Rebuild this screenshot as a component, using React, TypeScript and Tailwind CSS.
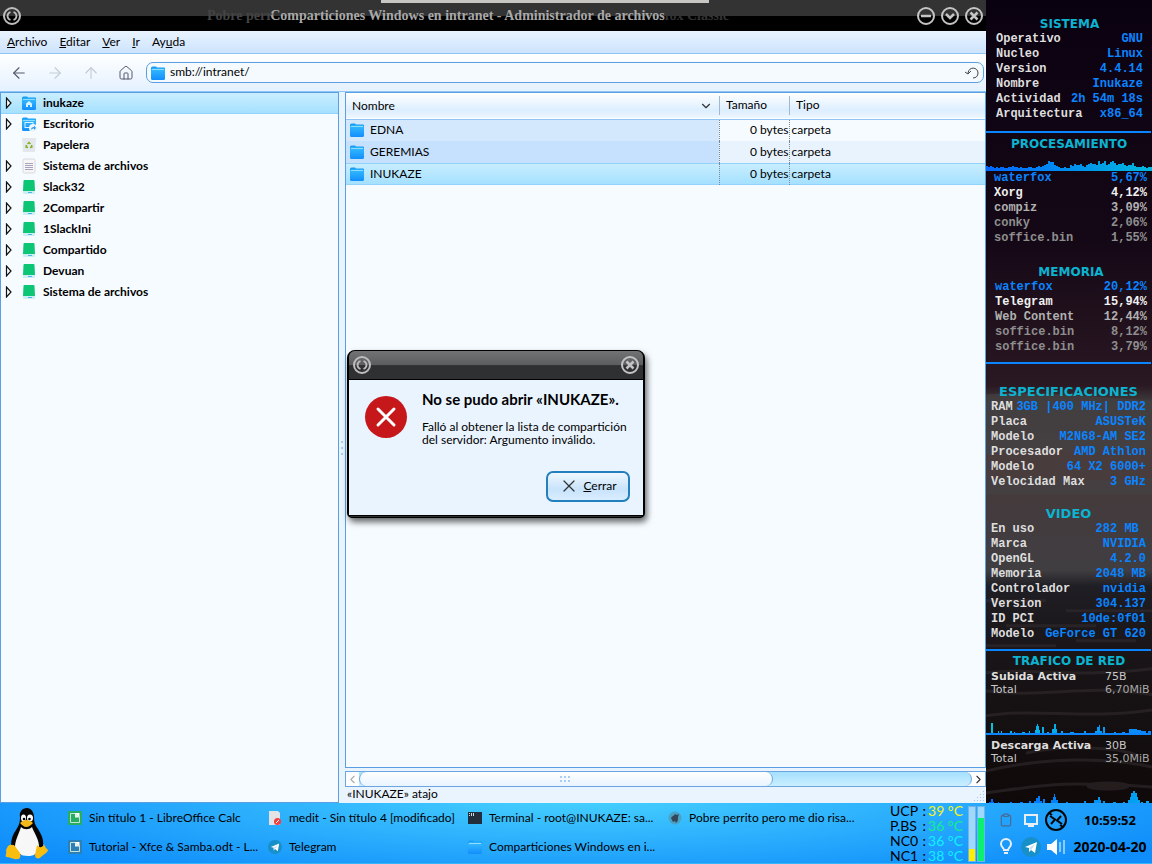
import React, { useState } from 'react';
import { ArrowLeft, ArrowRight, ArrowUp, ChevronDown, ChevronLeft, ChevronRight, Clipboard, House, X } from 'lucide-react';

type Row = { label: string; value: string; tone?: string };

const system: Row[] = [
  { label: 'Operativo', value: 'GNU' },
  { label: 'Nucleo', value: 'Linux' },
  { label: 'Version', value: '4.4.14' },
  { label: 'Nombre', value: 'Inukaze' },
  { label: 'Actividad', value: '2h 54m 18s' },
  { label: 'Arquitectura', value: 'x86_64' },
];

const cpu: Row[] = [
  { label: 'waterfox', value: '5,67%', tone: 'text-[#0a84ff]' },
  { label: 'Xorg', value: '4,12%', tone: 'text-[#f0f0f0]' },
  { label: 'compiz', value: '3,09%', tone: 'text-[#b0b0b0]' },
  { label: 'conky', value: '2,06%', tone: 'text-[#8e8e8e]' },
  { label: 'soffice.bin', value: '1,55%', tone: 'text-[#8e8e8e]' },
];

const memory: Row[] = [
  { label: 'waterfox', value: '20,12%', tone: 'text-[#0a84ff]' },
  { label: 'Telegram', value: '15,94%', tone: 'text-[#f0f0f0]' },
  { label: 'Web Content', value: '12,44%', tone: 'text-[#b0b0b0]' },
  { label: 'soffice.bin', value: '8,12%', tone: 'text-[#8e8e8e]' },
  { label: 'soffice.bin', value: '3,79%', tone: 'text-[#8e8e8e]' },
];

const specs: Row[] = [
  { label: 'RAM', value: '3GB |400 MHz| DDR2' },
  { label: 'Placa', value: 'ASUSTeK' },
  { label: 'Modelo', value: 'M2N68-AM SE2' },
  { label: 'Procesador', value: 'AMD Athlon' },
  { label: 'Modelo', value: '64 X2 6000+' },
  { label: 'Velocidad Max', value: '3 GHz' },
];

const video: Row[] = [
  { label: 'En uso', value: '282 MB ' },
  { label: 'Marca', value: 'NVIDIA' },
  { label: 'OpenGL', value: '4.2.0' },
  { label: 'Memoria', value: '2048 MB' },
  { label: 'Controlador', value: 'nvidia' },
  { label: 'Version', value: '304.137' },
  { label: 'ID PCI', value: '10de:0f01' },
  { label: 'Modelo', value: 'GeForce GT 620' },
];

const cpuLoad = [
  4, 3, 4, 3, 2, 3, 2, 3, 3, 2, 2, 3, 3, 4, 3, 3, 2, 3, 2, 2, 2, 3, 3, 2, 2, 3, 4, 3, 4, 5, 6, 9, 8, 8, 5, 4, 3, 2, 2, 3, 2,
  2, 5, 4, 6, 5, 5, 6, 4, 3, 5, 6, 7, 6, 6, 5, 9, 6, 7, 9, 5, 6, 8, 9, 7, 5, 6, 6, 7, 5, 4, 5, 5, 7, 4, 3, 3, 3, 4, 3, 2, 3, 3,
];

// x, width, height
const upload = [
  [5, 2, 10], [12, 1, 2], [15, 1, 2], [24, 2, 2], [28, 1, 1], [36, 3, 1], [43, 1, 2], [49, 5, 3], [50, 3, 7], [51, 1, 9], [56, 2, 6],
  [61, 2, 1], [66, 5, 4], [68, 2, 9], [75, 2, 2], [84, 4, 1], [98, 2, 2], [109, 7, 2], [111, 3, 6], [113, 1, 8], [117, 2, 6],
  [128, 2, 1], [136, 3, 1], [143, 8, 4], [151, 4, 3], [155, 5, 2], [162, 3, 2],
];

const download = [
  [3, 5, 1], [5, 2, 4], [12, 1, 1], [24, 2, 1], [34, 3, 1], [43, 2, 2], [48, 8, 2], [50, 4, 5], [52, 2, 7], [57, 2, 4], [65, 7, 3],
  [67, 3, 6], [68, 1, 9], [80, 2, 1], [98, 2, 2], [108, 7, 3], [112, 2, 6], [117, 2, 2], [127, 3, 1], [137, 2, 1], [142, 12, 3],
  [144, 8, 6], [145, 6, 10], [147, 2, 12], [155, 2, 1], [160, 3, 2],
];

const places = [
  { name: 'inukaze', icon: 'home', open: true },
  { name: 'Escritorio', icon: 'desktop', open: true },
  { name: 'Papelera', icon: 'trash', open: false },
  { name: 'Sistema de archivos', icon: 'file', open: true },
  { name: 'Slack32', icon: 'drive', open: true },
  { name: '2Compartir', icon: 'drive', open: true },
  { name: '1SlackIni', icon: 'drive', open: true },
  { name: 'Compartido', icon: 'drive', open: true },
  { name: 'Devuan', icon: 'drive', open: true },
  { name: 'Sistema de archivos', icon: 'drive', open: true },
];

const folders = [
  { name: 'EDNA', row: '', cell: 'bg-[#d3e7fd]' },
  { name: 'GEREMIAS', row: 'bg-[#e8f3fe]', cell: 'bg-[#c6e1fd]' },
  { name: 'INUKAZE', row: 'bg-linear-to-b from-[#c9eeff] to-[#a3e0ff] shadow-[inset_0_1px_0_#93d2fb,inset_0_-1px_0_#93d2fb]', cell: '' },
];

const tasks = [
  { name: 'Sin título 1 - LibreOffice Calc', icon: 'calc' },
  { name: 'medit - Sin título 4 [modificado]', icon: 'medit' },
  { name: 'Terminal - root@INUKAZE: sa...', icon: 'terminal' },
  { name: 'Pobre perrito pero me dio risa...', icon: 'waterfox' },
  { name: 'Tutorial - Xfce & Samba.odt - L...', icon: 'writer' },
  { name: 'Telegram', icon: 'telegram' },
  { name: 'Comparticiones Windows en i...', icon: 'folder' },
];

const temps = [
  { name: 'UCP', value: '39 °C', tone: 'text-[#f4f421]' },
  { name: 'P.BS', value: '36 °C', tone: 'text-[#10f08a]' },
  { name: 'NC0', value: '36 °C', tone: 'text-[#10f0ff]' },
  { name: 'NC1', value: '38 °C', tone: 'text-[#10f0ff]' },
];

const FolderIcon = ({ children }: { children?: React.ReactNode }) => (
  <svg width="16" height="16" viewBox="0 0 16 16" className="shrink-0">
    <defs>
      <linearGradient id="folder" x1="0" y1="0" x2="0" y2="1">
        <stop offset="0" stopColor="#35bcff" />
        <stop offset="1" stopColor="#128efc" />
      </linearGradient>
    </defs>
    <path d="M1 3q0-1.500 1.500-1.500H6l1 1h7q1 0 1 1V9H1z" fill="#1a9df5" />
    <rect x="1" y="3.500" width="14" height="11.500" rx="1.500" fill="url(#folder)" />
    <path d="M2 4.500h12" stroke="#8fdcff" />
    {children}
  </svg>
);

const TelegramIcon = ({ size }: { size: number }) => (
  <svg width={size} height={size} viewBox="0 0 20 20" className="shrink-0">
    <circle cx="10" cy="10" r="10" fill="#178fc9" />
    <path d="M4 10l12-5-2 11-4-3-2 2v-4z" fill="#fff" />
    <path d="M8 11l6-4-4 6z" fill="#c5dff0" />
  </svg>
);

const PlaceIcon = ({ icon }: { icon: string }) => {
  if (icon === 'home') {
    return (
      <FolderIcon>
        <path d="M8 6l3.500 3H11v3H9v-2H7v2H5V9h-.500z" fill="#d9f3ff" />
      </FolderIcon>
    );
  }
  if (icon === 'desktop') {
    return (
      <FolderIcon>
        <rect x="4" y="6.500" width="8" height="5" fill="none" stroke="#d9f3ff" />
        <circle cx="12" cy="12" r="4" fill="#eaf6ff" />
        <path d="M10 14c0-2 1-3 3-3v-1.500L15 12l-2 2v-1.500c-1.500 0-2 .5-3 1.500z" fill="#2c97ee" />
      </FolderIcon>
    );
  }
  if (icon === 'trash') {
    return (
      <svg width="16" height="16" viewBox="0 0 16 16">
        <path d="M1 1h14l-1 14H2z" fill="#e4e8ec" />
        <path d="M6.500 7L8 5.500 9.500 7M10.500 8l.5 2-2 .5M7 10.500l-2-.5.500-2" fill="none" stroke="#7fae1a" strokeWidth="1.400" />
      </svg>
    );
  }
  if (icon === 'file') {
    return (
      <svg width="16" height="16" viewBox="0 0 16 16">
        <rect x="2" y="1" width="12" height="14" rx="1.500" fill="#f6f6f8" stroke="#d8d8dc" />
        <path d="M4 5.500h8M4 7.500h8M4 9.500h8M4 11.500h8" stroke="#a9a2bd" />
      </svg>
    );
  }
  return (
    <svg width="16" height="16" viewBox="0 0 16 16">
      <path d="M2 11h12v3q0 1-1 1H3q-1 0-1-1z" fill="#cdeef2" />
      <path d="M2.500 2q0-1 1-1h9q1 0 1 1l.500 10H2z" fill="#0cc676" />
      <path d="M7 13.500h4" stroke="#49b7ee" />
    </svg>
  );
};

const TaskIcon = ({ icon }: { icon: string }) => {
  if (icon === 'folder') return <FolderIcon />;
  if (icon === 'telegram') return <TelegramIcon size={14} />;
  if (icon === 'calc' || icon === 'writer') {
    return (
      <svg width="14" height="14" viewBox="0 0 14 14" className="shrink-0">
        <rect width="14" height="14" rx="1" fill={icon === 'calc' ? '#27ae60' : '#2d80b5'} />
        <path d="M2.500 2.500H8l3.500 3.500v5.500h-9z" fill="none" stroke="#c4e4df" />
        <path d="M7 2h4.500v4.500z" fill="#fff" />
        <path d="M7 2v4.500h4.500z" fill="#e8f5f0" />
      </svg>
    );
  }
  if (icon === 'medit') {
    return (
      <svg width="14" height="14" viewBox="0 0 14 14" className="shrink-0">
        <path d="M1 0h9l2 2v12H1z" fill="#e3e3e5" />
        <circle cx="9.500" cy="10.500" r="3.500" fill="#f04040" />
        <path d="M8 12l3-3" stroke="#fff" />
      </svg>
    );
  }
  if (icon === 'terminal') {
    return (
      <svg width="14" height="14" viewBox="0 0 14 14" className="shrink-0">
        <rect y="1" width="14" height="12" fill="#232e3c" />
        <path d="M1.500 2v1M1.500 4v1M3.500 2v3M5.500 2v3" stroke="#cfd5da" />
      </svg>
    );
  }
  return (
    <svg width="14" height="14" viewBox="0 0 14 14" className="shrink-0">
      <circle cx="7" cy="7" r="6.500" fill="#4aa3c4" />
      <path d="M3 7c1-2 3-2 4-4l2 1 2-1-1 3c0 3 0 4-2 6l-1-2-2 1-1-2z" fill="#33465a" />
    </svg>
  );
};

const Tux = () => (
  <svg width="44" height="54" viewBox="0 0 44 54">
    <path d="M22 1c-5 0-8 4-7 9 0 6-1 8-4 13-3 4-5 9-5 15l4 10h23l5-9c1-7-2-12-5-17-3-4-4-7-4-12 0-5-3-9-7-9z" fill="#050505" />
    <path d="M16 20c3 3 8 3 11 0 2 6 7 12 7 20-1 7-5 9-11 9-7 0-12-3-13-9 0-7 4-13 6-20z" fill="#f7f7f7" />
    <ellipse cx="18.500" cy="11" rx="2.500" ry="3.500" fill="#fff" />
    <ellipse cx="25" cy="11" rx="3" ry="3.500" fill="#fff" />
    <circle cx="19" cy="12" r="1.300" />
    <circle cx="24.500" cy="12" r="1.300" />
    <path d="M15 16c2-2 4-3 6-3 3 0 5 1 7 3-2 2-4 4-7 4-2 0-4-2-6-4z" fill="#f5b81a" />
    <path d="M3 39c2-2 5-1 6-1l6 8c1 4 0 6-3 6-3 1-7-2-11-2-1-2 1-4 0-7z" fill="#f7bd10" />
    <path d="M32 38c2 3 6 3 7-1 1 3 2 4 4 6 0 3-6 5-8 8-3 1-5 0-5-3z" fill="#f7bd10" />
  </svg>
);

const Emblem = () => (
  <svg width="20" height="20" viewBox="0 0 20 20" fill="none" stroke="#bdbdbd">
    <circle cx="10" cy="10" r="8" strokeWidth="2" />
    <path d="M8.500 6c-4 1.500-4 6.500 0 8M11.500 6c4 1.500 4 6.500 0 8" strokeWidth="1.800" />
  </svg>
);

const WindowButton = ({ label, d }: { label: string; d: string }) => (
  <button type="button" aria-label={label}>
    <svg width="20" height="20" viewBox="0 0 20 20" fill="none" stroke="#c4c4c4">
      <circle cx="10" cy="10" r="8" strokeWidth="2" />
      <path d={d} strokeWidth="2.500" />
    </svg>
  </button>
);

const Heading = ({ children, large }: { children: string; large?: boolean }) => (
  <h2
    className={`text-center font-['DejaVu_Sans',sans-serif] font-bold text-[#0bb4d0] ${
      large ? 'text-[13px] leading-[16px]' : 'text-[12px] leading-[15px]'
    }`}
  >
    {children}
  </h2>
);

const Rule = () => <div className="mr-px h-[2px] shrink-0 bg-[#0a84ff]" />;

const Rows = ({ rows }: { rows: Row[] }) => (
  <dl className="font-['Liberation_Mono',monospace] text-[12px] font-bold leading-[15px]">
    {rows.map((row, i) => (
      <div key={i} className="flex justify-between whitespace-pre">
        <dt className={row.tone ?? 'text-[#dedede]'}>{row.label}</dt>
        <dd className={row.tone ?? 'text-[#0a84ff]'}>{row.value}</dd>
      </div>
    ))}
  </dl>
);

const Spikes = ({ data, from, to, id }: { data: number[][]; from: string; to: string; id: string }) => (
  <svg viewBox="0 0 166 36" className="block h-[36px] w-full" preserveAspectRatio="none">
    <defs>
      <linearGradient id={id} gradientUnits="userSpaceOnUse" x1="0" y1="0" x2="166" y2="0">
        <stop offset="0" stopColor={from} />
        <stop offset="1" stopColor={to} />
      </linearGradient>
    </defs>
    {data.map(([x, w, h]) => (
      <rect key={`${x}-${h}`} x={x} y={36 - h} width={w} height={h} fill={`url(#${id})`} />
    ))}
  </svg>
);

const Traffic = ({ name, rate, total }: { name: string; rate: string; total: string }) => (
  <dl className="grid grid-cols-[114px_1fr] pl-[5px] pt-px font-['DejaVu_Sans',sans-serif] text-[11px] leading-[13px]">
    <dt className="font-bold text-[#dedede]">{name}</dt>
    <dd className="text-[#c8c8c8]">{rate}</dd>
    <dt className="text-[#c8c8c8]">Total</dt>
    <dd className="text-[#a8a8a8]">{total}</dd>
  </dl>
);

// Sunset wallpaper behind the monitor
const Wallpaper = () => (
  <svg className="absolute inset-0 h-full w-full" viewBox="0 0 166 802" preserveAspectRatio="none">
    <defs>
      <linearGradient id="sky" x1="0" y1="0" x2="0" y2="1">
        <stop offset="0" stopColor="#0a0110" />
        <stop offset="0.300" stopColor="#150816" />
        <stop offset="0.480" stopColor="#2a1822" />
        <stop offset="0.500" stopColor="#3e3a3c" />
        <stop offset="0.580" stopColor="#47393a" />
        <stop offset="0.660" stopColor="#423c3f" />
        <stop offset="0.710" stopColor="#403e41" />
        <stop offset="0.730" stopColor="#1f1e24" />
        <stop offset="0.800" stopColor="#1a1619" />
        <stop offset="1" stopColor="#0f0909" />
      </linearGradient>
    </defs>
    <rect width="166" height="802" fill="url(#sky)" />
    <path d="M0 394c40-4 110 2 166 6v94H0z" fill="#444243" opacity=".7" />
    <path d="M0 455c60-12 110 4 166-8v30C110 485 60 470 0 480z" fill="#4d3a3c" opacity=".6" />
    <g fill="none" stroke="#322b2e" strokeWidth="3" opacity=".6">
      <path d="M0 600h60M80 610h86M20 625h90M0 645h70M90 640h60M0 672c40-6 80 6 166-4M0 690c60 8 100-8 166 4M0 715c50-8 100 4 166-6" />
      <path d="M0 770c60-14 120-14 166-4M0 792c60-8 70-12 166-6M40 752c40-8 90-6 110 2" />
      <ellipse cx="122" cy="785" rx="20" ry="3" fill="#352b2a" />
    </g>
  </svg>
);

const Monitor = () => (
  <aside className="relative w-[166px] shrink-0 overflow-hidden bg-[#10060f]">
    <Wallpaper />
    <div className="relative flex h-full flex-col">
      <section className="pb-[9px] pl-[10px] pr-[9px] pt-[17px]">
        <Heading>SISTEMA</Heading>
        <Rows rows={system} />
      </section>
      <Rule />
      <section className="pt-[4px]">
        <Heading>PROCESAMIENTO</Heading>
        <svg viewBox="0 0 166 19" className="block h-[19px] w-full" preserveAspectRatio="none">
          <defs>
            <linearGradient id="cpu" gradientUnits="userSpaceOnUse" x1="0" y1="0" x2="166" y2="0">
              <stop offset="0" stopColor="#0066ff" />
              <stop offset="1" stopColor="#00b8dc" />
            </linearGradient>
          </defs>
          {cpuLoad.map((h, i) => (
            <rect key={i} x={i * 2} y={18 - h} width="2" height={h + 1} fill="url(#cpu)" />
          ))}
        </svg>
        <div className="pl-[8px] pr-[5px]">
          <Rows rows={cpu} />
        </div>
      </section>
      <section className="pb-[7px] pl-[9px] pr-[5px] pt-[19px]">
        <Heading>MEMORIA</Heading>
        <Rows rows={memory} />
      </section>
      <Rule />
      <section className="pl-[5px] pr-[6px] pt-[20px]">
        <Heading large>ESPECIFICACIONES</Heading>
        <Rows rows={specs} />
      </section>
      <section className="pb-[7px] pl-[5px] pr-[6px] pt-[16px]">
        <Heading large>VIDEO</Heading>
        <Rows rows={video} />
      </section>
      <Rule />
      <section className="pt-[3px]">
        <Heading>TRAFICO DE RED</Heading>
        <Traffic name="Subida Activa" rate="75B" total="6,70MiB" />
      </section>
      <div className="mt-auto">
        <Spikes data={upload} from="#00c8dc" to="#0a84ff" id="up" />
        <Rule />
        <div className="pb-[2px] pt-[3px]">
          <Traffic name="Descarga Activa" rate="30B" total="35,0MiB" />
        </div>
        <Spikes data={download} from="#0066ff" to="#00a8f0" id="down" />
      </div>
    </div>
  </aside>
);

const ErrorDialog = ({ onClose }: { onClose: () => void }) => (
  <div
    role="alertdialog"
    aria-labelledby="error-title"
    className="absolute left-[347px] top-[350px] w-[298px] rounded-[8px] rounded-b-[5px] border-x-2 border-y border-black bg-[#2e2f31] pb-px shadow-[2px_4px_6px_rgba(0,0,0,0.6)]"
  >
    <div className="flex h-[28px] items-center justify-between rounded-t-[6px] bg-linear-to-b from-[#727374] from-0% via-[#5c5d5e] via-50% to-[#2f3032] to-52% px-[3px]">
      <Emblem />
      <WindowButton label="Cerrar diálogo" d="M6.500 6.500l7 7M13.500 6.500l-7 7" />
    </div>
    <div className="border-y border-black bg-[#eaf4ff] pb-[13px] pl-[16px] pr-[13px] pt-[10px] text-black">
      <div className="flex gap-[15px]">
        <svg width="42" height="42" viewBox="0 0 42 42" className="mt-[6px] shrink-0">
          <circle cx="21" cy="21" r="21" fill="#c6181b" />
          <path d="M13 13l16 16M29 13L13 29" stroke="#fff" strokeWidth="3" strokeLinecap="round" />
        </svg>
        <div className="whitespace-nowrap">
          <h1 id="error-title" className="text-[15px] font-bold leading-[18px]">No se pudo abrir «INUKAZE».</h1>
          <p className="mt-[12px] text-[12px] leading-[13px]">
            Falló al obtener la lista de compartición
            <br />
            del servidor: Argumento inválido.
          </p>
        </div>
      </div>
      <button
        type="button"
        onClick={onClose}
        className="ml-auto mt-[25px] flex h-[31px] w-[84px] items-center justify-center gap-[4px] rounded-[7px] border-2 border-[#2380bd] bg-linear-to-b from-[#eff7ff] via-[#c8e3fb] via-60% to-[#d9edff] pb-[2px] text-[12px]"
      >
        <X size={20} strokeWidth={1.5} color="#333" />
        <span><u>C</u>errar</span>
      </button>
    </div>
  </div>
);

const FileManager = () => {
  const [path, setPath] = useState('smb://intranet/');
  const [dialogOpen, setDialogOpen] = useState(true);

  return (
    <main className="relative flex min-w-0 flex-1 flex-col bg-[#eaf4ff] text-[12px] text-black">
      {/* Title bar */}
      <header className="relative flex h-[31px] shrink-0 items-center justify-between bg-linear-to-b from-[#333] from-50% to-black to-52% px-[2px]">
        <Emblem />
        <h1 className="absolute inset-x-0 mr-[51px] truncate text-center font-['Liberation_Serif',serif] text-[14px] font-bold text-[#a8a8a8]">
          Comparticiones Windows en intranet - Administrador de archivos
        </h1>
        <span className="absolute left-[207px] font-['Liberation_Serif',serif] text-[14px] font-bold text-[#444]">Pobre perr</span>
        <span className="absolute right-[257px] font-['Liberation_Serif',serif] text-[14px] font-bold text-[#333]">fox Classic</span>
        <div className="absolute left-[381px] top-0 h-[3px] w-[328px] bg-[#c8c6c3]" />
        <div className="flex gap-[4px]">
          <WindowButton label="Minimizar" d="M5 10h10" />
          <WindowButton label="Maximizar" d="M6 8l4 4 4-4" />
          <WindowButton label="Cerrar" d="M6.500 6.500l7 7M13.500 6.500l-7 7" />
        </div>
      </header>

      <nav className="flex h-[23px] shrink-0 items-center gap-[12px] border-b border-[#8fc4f5] bg-linear-to-b from-[#e9f3ff] to-[#cde4fd] px-[7px]">
        <button type="button"><u>A</u>rchivo</button>
        <button type="button"><u>E</u>ditar</button>
        <button type="button"><u>V</u>er</button>
        <button type="button"><u>I</u>r</button>
        <button type="button">Ay<u>u</u>da</button>
      </nav>

      {/* Toolbar */}
      <div className="flex h-[38px] shrink-0 items-center border-b border-[#8fc4f5] bg-linear-to-b from-white to-[#e4f1ff] pl-[10px] pr-[2px]">
        <div className="flex gap-[18px] text-[#55596a]">
          <button type="button" aria-label="Atrás"><ArrowLeft size={18} strokeWidth={1.5} /></button>
          <button type="button" aria-label="Adelante" className="text-[#c3cbd6]"><ArrowRight size={18} strokeWidth={1.5} /></button>
          <button type="button" aria-label="Subir" className="text-[#c3cbd6]"><ArrowUp size={18} strokeWidth={1.5} /></button>
          <button type="button" aria-label="Inicio">
            <House size={16} strokeWidth={1.5} />
          </button>
        </div>
        <div className="ml-[12px] flex h-[21px] flex-1 items-center gap-[4px] rounded-[7px] border border-[#5a9fe2] bg-[#f5faff] px-[3px]">
          <FolderIcon />
          <input aria-label="Ubicación" value={path} onChange={(e) => setPath(e.target.value)} className="min-w-0 flex-1 bg-transparent pb-px text-[12px] outline-none" />
          <button type="button" aria-label="Recargar">
            <svg width="15" height="15" viewBox="0 0 15 15" fill="none" stroke="#444">
              <path d="M3 8c1-7 10-6 10 0 0 3-2 5-5 5M0 7l3 2 3-3" />
            </svg>
          </button>
        </div>
      </div>

      <div className="flex min-h-0 flex-1">
        {/* Places tree */}
        <ul className="w-[339px] shrink-0 border border-[#5a9fe2] bg-[#f6fbff] font-bold">
          {places.map((place, i) => (
            <li
              key={i}
              className={`flex h-[21px] items-center pb-[2px] pl-[4px] ${i === 0 ? 'bg-linear-to-b from-[#c9eeff] to-[#a3e0ff] shadow-[inset_0_-1px_0_#93d2fb]' : ''}`}
            >
              <button type="button" aria-label={`Expandir ${place.name}`} className={place.open ? '' : 'invisible'}>
                <svg width="8" height="12" viewBox="0 0 8 12" fill="#fff" stroke="#111">
                  <path d="M1.500 1v10L6 6z" strokeWidth="1.200" />
                </svg>
              </button>
              <span className="ml-[8px]"><PlaceIcon icon={place.icon} /></span>
              <span className="ml-[6px]">{place.name}</span>
            </li>
          ))}
        </ul>

        <div className="flex w-[6px] shrink-0 flex-col items-center justify-center gap-[4px]">
          <i className="size-[2px] bg-[#a9cdf3]" />
          <i className="size-[2px] bg-[#a9cdf3]" />
          <i className="size-[2px] bg-[#a9cdf3]" />
        </div>

        <div className="flex min-w-0 flex-1 flex-col">
          <div className="flex-1 border border-[#5a9fe2] bg-[#f6fbff]">
            <table className="w-full table-fixed border-collapse">
              <colgroup>
                <col />
                <col className="w-[70px]" />
                <col className="w-[196px]" />
              </colgroup>
              <thead>
                <tr className="h-[26px] border-b border-[#8fc4f5] bg-linear-to-b from-white via-[#dceeff] via-70% to-[#eef7ff] text-left">
                  <th className="px-[6px] font-normal">
                    <span className="flex items-center justify-between">Nombre <ChevronDown size={14} strokeWidth={2} color="#333" /></span>
                  </th>
                  <th className="font-normal"><span className="block h-[19px] border-l border-[#9db9d6] pl-[6px]">Tamaño</span></th>
                  <th className="font-normal"><span className="block h-[19px] border-l border-[#9db9d6] pl-[6px]">Tipo</span></th>
                </tr>
              </thead>
              <tbody>
                {folders.map((folder) => (
                  <tr key={folder.name} className={`h-[22px] ${folder.row}`}>
                    <td className={`pl-[3px] ${folder.cell}`}>
                      <span className="flex items-center gap-[5px]"><FolderIcon />{folder.name}</span>
                    </td>
                    <td className="border-x border-dotted border-[#7b8794] text-right">0 bytes</td>
                    <td className="pl-[2px]">carpeta</td>
                  </tr>
                ))}
              </tbody>
            </table>
          </div>

          {/* Horizontal scrollbar */}
          <div className="mt-[3px] flex h-[16px] shrink-0 items-center border border-[#6ba6e0] bg-white">
            <button type="button" aria-label="Desplazar a la izquierda" className="text-[#aaa]"><ChevronLeft size={13} /></button>
            <div className="flex h-full flex-1 overflow-hidden rounded-r-[8px] border-r border-[#6ba6e0] bg-linear-to-b from-[#a5e0ff] to-[#c9eeff]">
              <div className="grid h-full w-[414px] place-content-center rounded-[8px] border-x border-[#6ba6e0] bg-linear-to-b from-white to-[#e9f4ff]">
                <svg width="12" height="6" viewBox="0 0 12 6" fill="#a9cdf3">
                  <path d="M0 0h2v2H0zM4 0h2v2H4zM8 0h2v2H8zM0 4h2v2H0zM4 4h2v2H4zM8 4h2v2H8z" />
                </svg>
              </div>
            </div>
            <button type="button" aria-label="Desplazar a la derecha" className="text-[#333]"><ChevronRight size={13} /></button>
          </div>
          <div className="flex h-[16px] shrink-0 items-end justify-between pl-[2px]">
            <p className="self-start leading-[14px]">«INUKAZE» atajo</p>
            <svg width="12" height="12" viewBox="0 0 12 12" fill="#a9c3e3">
              <path d="M9 0h1v1H9zM6 3h1v1H6zM9 3h1v1H9zM3 6h1v1H3zM6 6h1v1H6zM9 6h1v1H9zM0 9h1v1H0zM3 9h1v1H3zM6 9h1v1H6zM9 9h1v1H9z" />
            </svg>
          </div>
        </div>
      </div>

      {dialogOpen && <ErrorDialog onClose={() => setDialogOpen(false)} />}
    </main>
  );
};

const Taskbar = () => (
  <footer className="flex h-[61px] shrink-0 bg-[radial-gradient(ellipse_60%_150%_at_50%_-10%,#48d2ff,#0f8dfb)] text-[12px] text-black shadow-[inset_0_-1px_0_#35b4ff]">
    <button type="button" aria-label="Menú" className="w-[54px] shrink-0 pl-[5px]"><Tux /></button>
    <div className="ml-[14px] grid flex-1 grid-cols-4 grid-rows-2 pb-[2px]">
      {tasks.map((task) => (
        <button key={task.name} type="button" className="flex min-w-0 items-center gap-[7px] text-left">
          <span className="flex w-[14px] shrink-0 justify-center"><TaskIcon icon={task.icon} /></span>
          <span className="whitespace-nowrap">{task.name}</span>
        </button>
      ))}
    </div>

    <dl className="ml-[22px] w-[73px] shrink-0 whitespace-nowrap text-[14px] leading-[15px]">
      {temps.map((temp) => (
        <div key={temp.name} className="flex justify-between">
          <dt className="flex w-[36px] justify-between"><span>{temp.name}</span><span>:</span></dt>
          <dd className={temp.tone}>{temp.value}</dd>
        </div>
      ))}
    </dl>

    <div className="ml-[5px] flex shrink-0 gap-px pb-[2px] pt-[3px]">
      <div className="flex w-[8px] items-end border border-[#6fb4ea] bg-[#9fd8fb]"><div className="h-[12px] w-full bg-[#ffee00]" /></div>
      <div className="flex w-[8px] items-end border border-[#6fb4ea] bg-[#9fd8fb]"><div className="h-[43px] w-full bg-[#0cf070]" /></div>
    </div>

    {/* Tray */}
    <div className="ml-[8px] grid w-[75px] shrink-0 grid-cols-3 grid-rows-2 place-items-center py-[4px]">
      <Clipboard size={14} strokeWidth={2} color="#4a6a94" />
      <svg width="16" height="16" viewBox="0 0 16 16" fill="none" stroke="#e8eef4" strokeWidth="2">
        <path d="M2 3h12v9H2zM5 14h6" />
      </svg>
      <svg width="22" height="22" viewBox="0 0 22 22" fill="none" stroke="#050505" strokeWidth="2">
        <circle cx="11" cy="11" r="10" />
        <path d="M5 7l5 3.500L6 15M17 15l-5-3.500L16 7" />
        <path d="M4 4l3 2M15 16l3 2" />
      </svg>
      <svg width="12" height="18" viewBox="0 0 12 18" fill="none" stroke="#e8eef4" strokeWidth="2">
        <path d="M4 12c0-2-3-3-3-6a5 5 0 0 1 10 0c0 3-3 4-3 6zM4 15h4" />
      </svg>
      <TelegramIcon size={20} />
      <svg width="20" height="16" viewBox="0 0 20 16" fill="#fff">
        <path d="M1 5h4l6-5v16l-6-5H1z" />
        <path d="M14 3v10M18 1v14" stroke="#fff" />
      </svg>
    </div>
    <div className="flex w-[84px] shrink-0 flex-col items-center justify-center gap-[9px] font-['Noto_Sans',sans-serif] font-bold leading-[18px]">
      <time className="text-[13px]">10:59:52</time>
      <time className="text-[14px]">2020-04-20</time>
    </div>
  </footer>
);

export default function App() {
  return (
    <div className="flex min-h-screen flex-col bg-black font-['Lato',sans-serif]">
      <div className="flex flex-1">
        <FileManager />
        <Monitor />
      </div>
      <Taskbar />
    </div>
  );
}
